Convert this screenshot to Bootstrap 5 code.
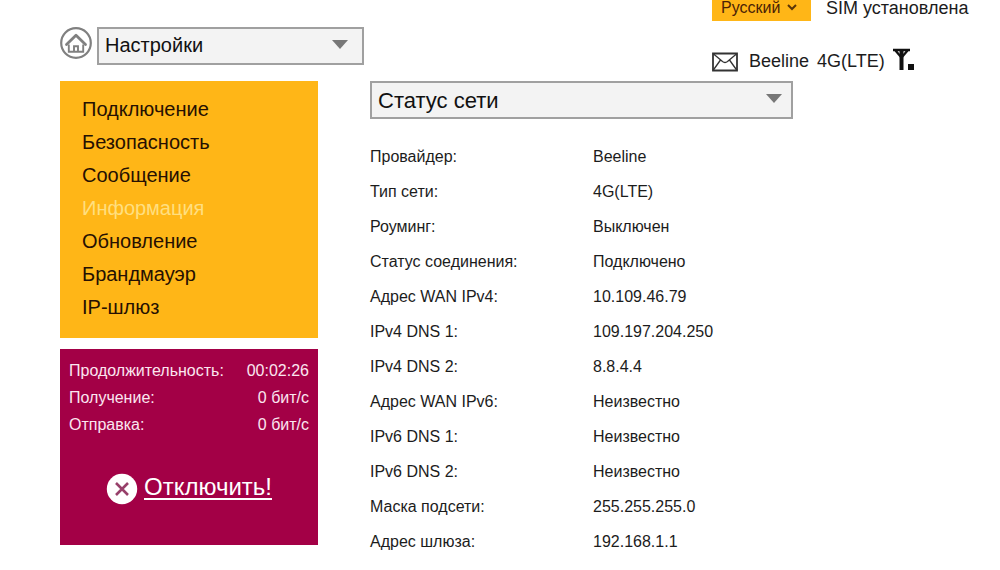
<!DOCTYPE html>
<html lang="ru">
<head>
<meta charset="utf-8">
<meta name="viewport" content="width=device-width, initial-scale=1">
<title>Статус сети</title>
<link href="https://cdn.jsdelivr.net/npm/bootstrap@5.3.0/dist/css/bootstrap.min.css" rel="stylesheet">
<style>
  body { font-family: "Liberation Sans", Arial, sans-serif; font-size: 16px; color: #1c1c1c; background: #fff; }
  .page { padding-left: 60px; padding-right: 27px; }
  .home-area { padding-top: 27px; gap: 5px; }
  .home-link { width: 32px; height: 32px; }
  .pick { appearance: none; background-color: #f3f3f3; border: 2px solid #a0a0a0; border-radius: 0; color: #111;
    height: 38px; padding: 0 32px 2px 6px; background-repeat: no-repeat; background-size: 16px 9px;
    background-image: url("data:image/svg+xml,%3Csvg xmlns='http://www.w3.org/2000/svg' viewBox='0 0 16 9'%3E%3Cpath d='M0 0h16L8 9z' fill='%23777'/%3E%3C/svg%3E"); }
  .pick-section { width: 267px; font-size: 20px; background-position: right 14px top 11px; }
  .pick-page { max-width: 423px; font-size: 22px; padding-bottom: 0; background-position: right 9px top 11px; }
  .lang { appearance: none; width: 99px; height: 21px; border: 0; border-radius: 0; padding: 0 24px 5px 9px; font-size: 16px; line-height: 16px; color: #4a2206;
    background: #ffb617 url("data:image/svg+xml,%3Csvg xmlns='http://www.w3.org/2000/svg' viewBox='0 0 10 7'%3E%3Cpath d='M1 1l4 4 4-4' fill='none' stroke='%235a3508' stroke-width='2'/%3E%3C/svg%3E") no-repeat right 14px top 4px / 10px 7px; }
  .status-area { width: 261px; font-size: 18px; }
  .sim-line { height: 21px; gap: 15px; }
  .sim-text { line-height: 16px; padding-bottom: 6px; }
  .net-line { margin-top: 24px; height: 30px; }
  .net-text { margin-left: 11px; gap: 8px; padding-top: 2px; }
  .content-row { margin-top: 6px; gap: 52px; }
  .side { width: 258px; gap: 11px; }
  .menu { background: #ffb617; padding: 12px 22px 14px; }
  .menu a { color: #261002; font-size: 20px; line-height: 33px; text-decoration: none; }
  .menu a.active { color: #ffdf80; }
  .traffic { background: #a30046; color: #fbe6f0; padding: 8px 9px 40px; }
  .traffic dl { line-height: 27px; }
  .cut-link { color: #fff; font-size: 24px; line-height: 28px; margin-top: 35px; gap: 6px; text-underline-offset: 3px; text-decoration-thickness: 2px; }
  .cut-link span { text-decoration: underline; padding-bottom: 4px; }
  .info { margin-top: 20px; max-width: 560px; }
  .info th { width: 223px; font-weight: 400; }
  .info th, .info td { height: 35px; padding: 0; vertical-align: middle; line-height: 20px; }
</style>
</head>
<body>
<div class="container-fluid page">
  <header class="d-flex align-items-start justify-content-between">
    <div class="home-area d-flex align-items-start">
      <a class="home-link" href="#" aria-label="Главная">
        <svg class="d-block" width="32" height="32" viewBox="0 0 32 32" fill="none" stroke="#808080">
          <circle cx="16" cy="16" r="14.8" stroke-width="2.2"/>
          <path d="M6.500 17.500 16 8.200l9.500 9.300" stroke-width="2.800" stroke-linecap="round" stroke-linejoin="round"/>
          <path d="M8.800 17.500v7.200h14.400v-7.200M14 24.500v-5.300h4v5.300" stroke-width="1.900"/>
        </svg>
      </a>
      <select class="pick pick-section" aria-label="Раздел"><option>Настройки</option></select>
    </div>
    <div class="status-area">
      <div class="sim-line d-flex">
        <select class="lang" aria-label="Язык"><option>Русский</option></select>
        <span class="sim-text text-nowrap">SIM установлена</span>
      </div>
      <div class="net-line d-flex align-items-center">
        <svg class="mt-1" width="26" height="20" viewBox="0 0 26 20" fill="none" stroke="#333" role="img" aria-label="Сообщения">
          <path d="M1 1.500h24v17H1z" stroke-width="1.800"/>
          <path d="M1 1.500l9.500 8Q13 11.500 15.500 9.500L25 1.500M1 18.500l7.500-10.500M25 18.500l-7.500-10.500" stroke-width="1.300"/>
        </svg>
        <div class="net-text d-flex text-nowrap"><span>Beeline</span><span>4G(LTE)</span></div>
        <svg class="ms-2" width="24" height="24" viewBox="0 0 24 24" role="img" aria-label="Сигнал">
          <path d="M0 2h17M2 2l6 7M15 2L9 9" fill="none" stroke="#111" stroke-width="2.300"/>
          <path d="M6.500 2h4v20h-4zM15 16h6v6h-6z" fill="#111"/>
        </svg>
      </div>
    </div>
  </header>
  <div class="content-row d-flex align-items-start">
    <aside class="side d-flex flex-column flex-shrink-0">
      <nav class="menu d-flex flex-column">
        <a href="#">Подключение</a>
        <a href="#">Безопасность</a>
        <a href="#">Сообщение</a>
        <a href="#" class="active" aria-current="page">Информация</a>
        <a href="#">Обновление</a>
        <a href="#">Брандмауэр</a>
        <a href="#">IP-шлюз</a>
      </nav>
      <section class="traffic">
        <dl class="mb-0">
          <div class="d-flex justify-content-between"><dt class="fw-normal">Продолжительность:</dt><dd class="mb-0">00:02:26</dd></div>
          <div class="d-flex justify-content-between"><dt class="fw-normal">Получение:</dt><dd class="mb-0">0 бит/с</dd></div>
          <div class="d-flex justify-content-between"><dt class="fw-normal">Отправка:</dt><dd class="mb-0">0 бит/с</dd></div>
        </dl>
        <a class="cut-link d-flex align-items-center justify-content-center text-decoration-none" href="#">
          <svg width="32" height="32" viewBox="0 0 32 32" aria-hidden="true">
            <circle cx="16" cy="16" r="15.200" fill="#fff"/>
            <path d="M10 10l12 12M22 10L10 22" stroke="#97406a" stroke-width="2.600"/>
          </svg>
          <span>Отключить!</span>
        </a>
      </section>
    </aside>
    <main class="flex-grow-1">
      <select class="pick pick-page d-block w-100" aria-label="Страница"><option>Статус сети</option></select>
      <table class="info w-100">
        <tbody>
          <tr><th scope="row">Провайдер:</th><td>Beeline</td></tr>
          <tr><th scope="row">Тип сети:</th><td>4G(LTE)</td></tr>
          <tr><th scope="row">Роуминг:</th><td>Выключен</td></tr>
          <tr><th scope="row">Статус соединения:</th><td>Подключено</td></tr>
          <tr><th scope="row">Адрес WAN IPv4:</th><td>10.109.46.79</td></tr>
          <tr><th scope="row">IPv4 DNS 1:</th><td>109.197.204.250</td></tr>
          <tr><th scope="row">IPv4 DNS 2:</th><td>8.8.4.4</td></tr>
          <tr><th scope="row">Адрес WAN IPv6:</th><td>Неизвестно</td></tr>
          <tr><th scope="row">IPv6 DNS 1:</th><td>Неизвестно</td></tr>
          <tr><th scope="row">IPv6 DNS 2:</th><td>Неизвестно</td></tr>
          <tr><th scope="row">Маска подсети:</th><td>255.255.255.0</td></tr>
          <tr><th scope="row">Адрес шлюза:</th><td>192.168.1.1</td></tr>
        </tbody>
      </table>
    </main>
  </div>
</div>
<script src="https://cdn.jsdelivr.net/npm/bootstrap@5.3.0/dist/js/bootstrap.bundle.min.js"></script>
</body>
</html>
